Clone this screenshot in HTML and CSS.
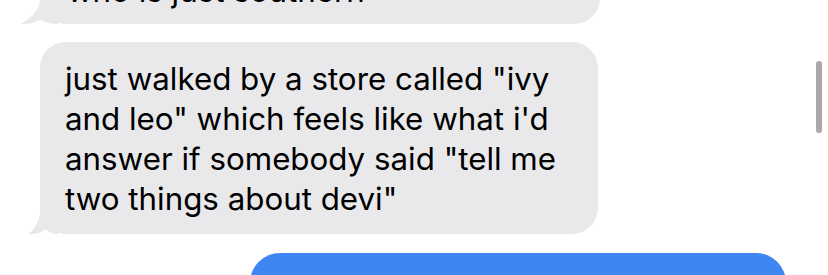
FILE: index.html
```html
<!DOCTYPE html>
<html lang="en">
<head>
    <meta charset="UTF-8">
    <meta name="viewport" content="width=device-width, initial-scale=1.0">
    <title>Messages</title>
    <link rel="stylesheet" href="styles.css">
</head>
<body>
    <div class="screen">
        <div class="thread">
            <div class="msg msg-in msg-top">
                <p>who is just southern</p>
                <svg class="tail tail-wide" viewBox="0 0 38 24" width="38" height="24">
                    <path d="M20 0 C19 11 11 19 0 24 C8 24.5 15 23 21 19.5 C25 22.5 31 24 38 24 L38 0 Z" />
                </svg>
            </div>
            <div class="msg msg-in msg-main">
                <p>just walked by a store called "ivy<br>and leo" which feels like what i'd<br>answer if somebody said "tell me<br>two things about devi"</p>
                <svg class="tail" viewBox="0 0 30 24" width="30" height="24">
                    <path d="M12 0 C12 11 7 19 0 24 C7 24.5 13 23 18 19.5 C21 22.5 25 24 30 24 L30 0 Z" />
                </svg>
            </div>
            <div class="msg msg-out"></div>
        </div>
        <div class="scrollbar"></div>
    </div>
</body>
</html>
```

FILE: styles.css
```css
body, html {
    margin: 0;
    padding: 0;
    height: 100%;
    background-color: white;
    overflow: hidden;
    font-family: Inter, "Liberation Sans", Arial, sans-serif;
}

.screen {
    position: relative;
    height: 275px;
    overflow: hidden;
}

.thread {
    display: flex;
    flex-direction: column;
    align-items: flex-start;
    gap: 18px;
    padding-left: 40px;
}

.msg {
    position: relative;
    box-sizing: border-box;
    border-radius: 26px;
}

.msg p {
    margin: 0;
    font-size: 31.3px;
    line-height: 40px;
    color: black;
    white-space: nowrap;
    position: relative;
    z-index: 1;
}

.msg-in {
    background-color: #e9e9eb;
    padding: 17px 20px 15px 25px;
}

.msg-top {
    width: 560px;
    margin-top: -48px;
    padding-top: 19px;
    padding-bottom: 13px;
    padding-left: 27px;
}

.msg-main {
    width: 558px;
}

.tail {
    position: absolute;
    bottom: 0;
    left: -12px;
    fill: #e9e9eb;
}

.tail-wide {
    left: -20px;
}

.msg-out {
    width: 536px;
    height: 60px;
    margin-left: 210px;
    margin-top: 1px;
    background-color: #3e86f1;
    border-radius: 30px;
}

/* scroll indicator */
.scrollbar {
    position: absolute;
    top: 61px;
    left: 816px;
    width: 6px;
    height: 72px;
    border-radius: 3px;
    background-color: #a9a9a9;
}
```
